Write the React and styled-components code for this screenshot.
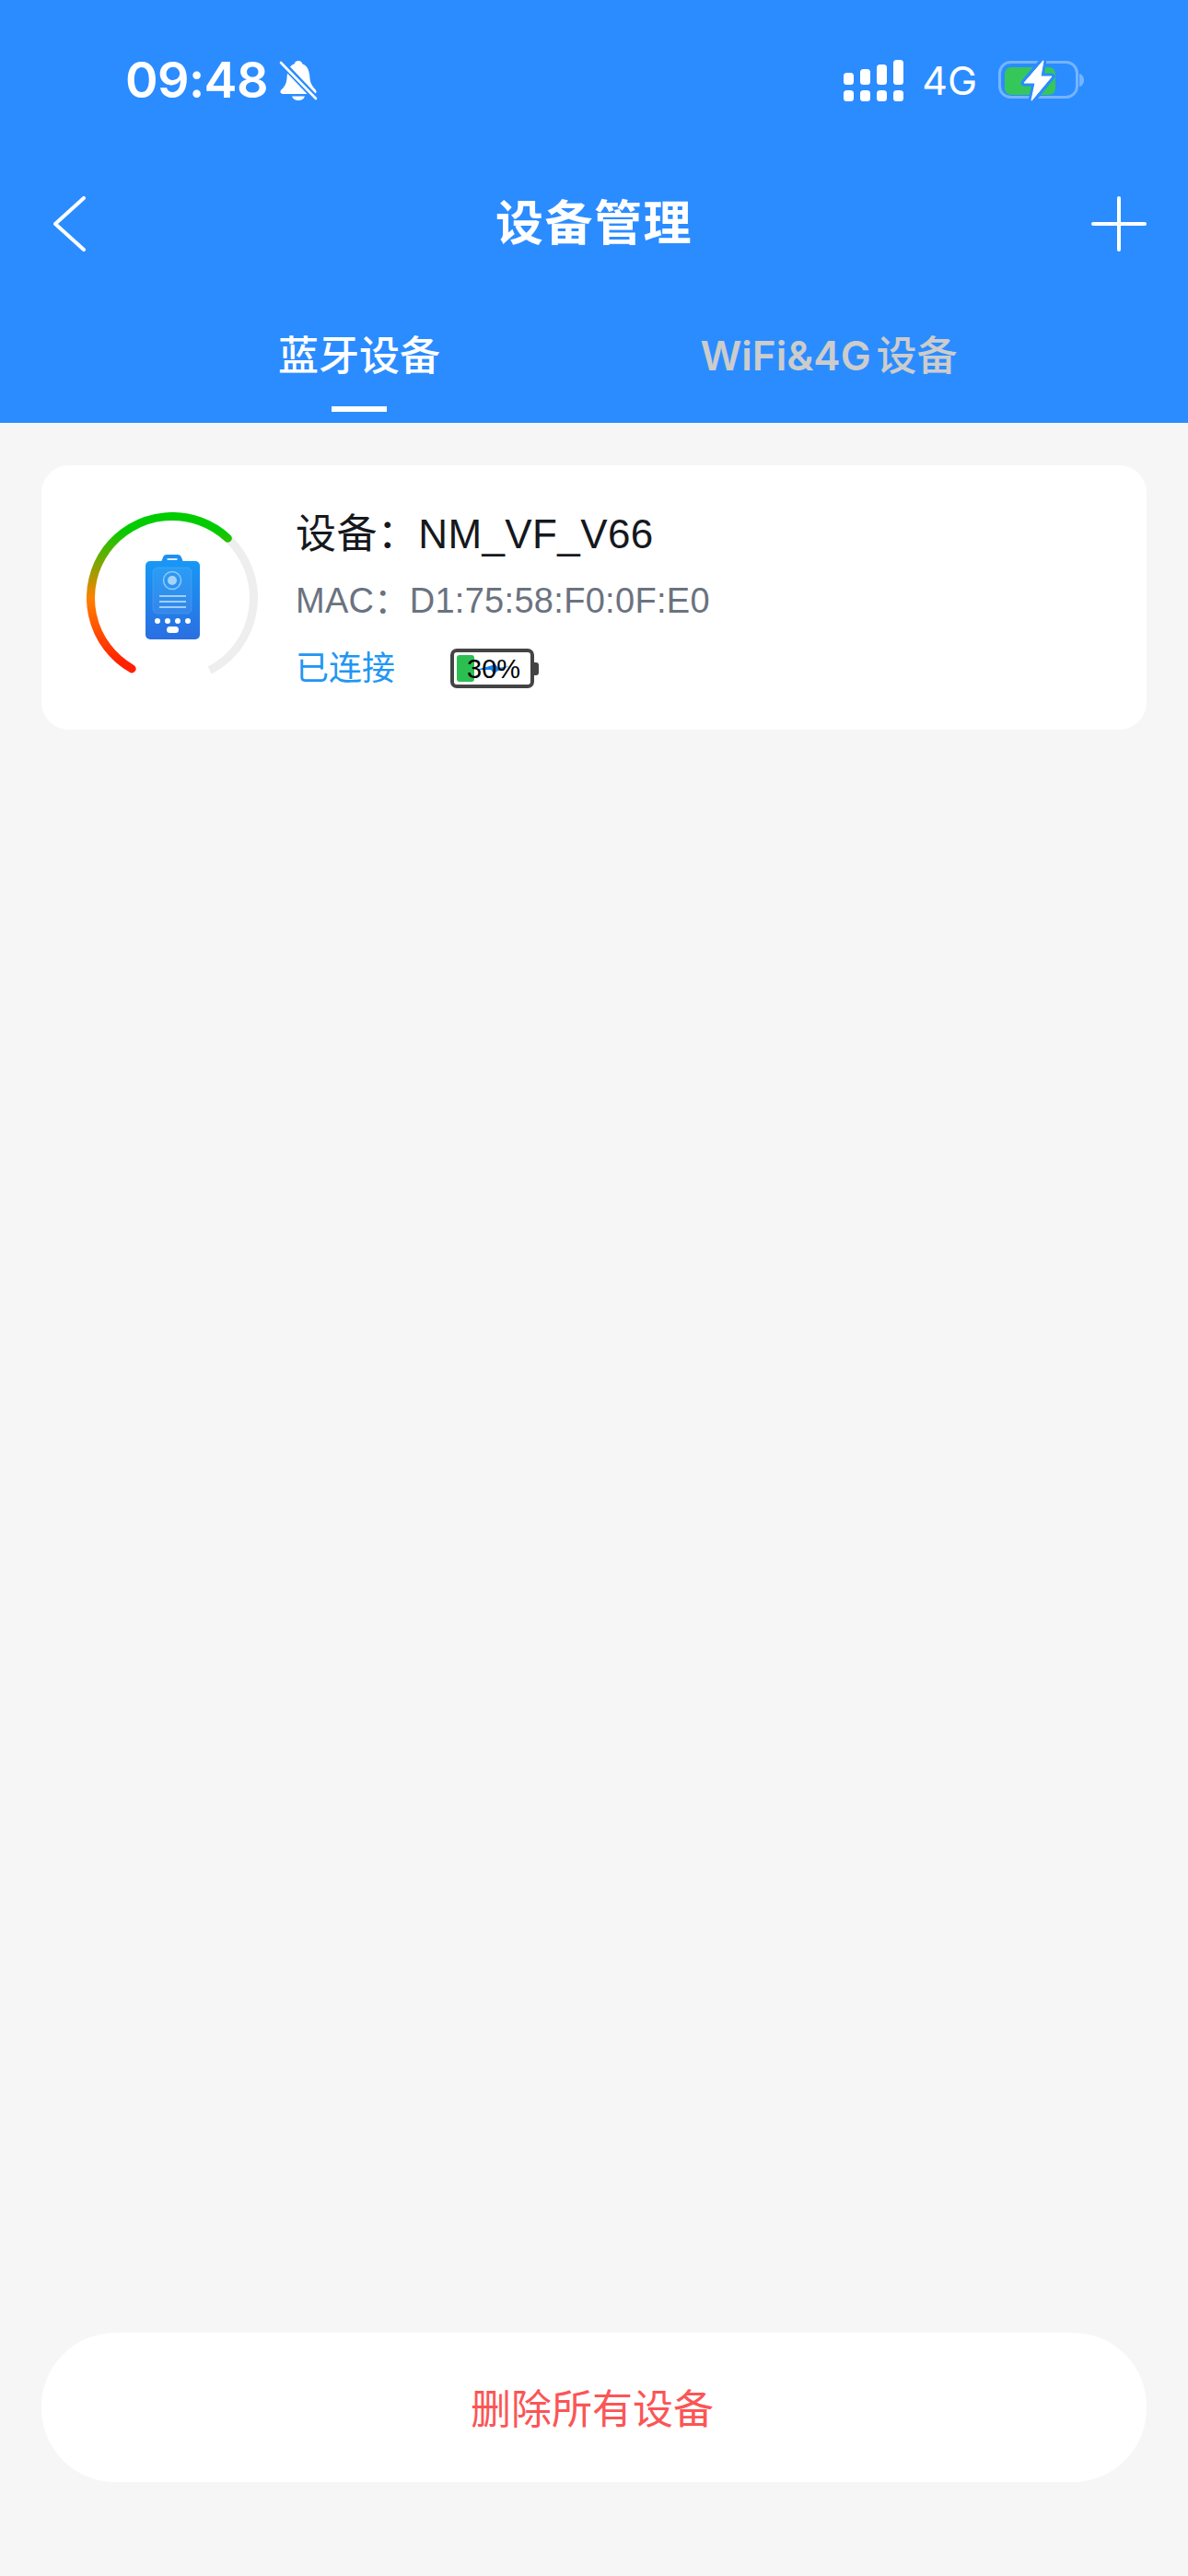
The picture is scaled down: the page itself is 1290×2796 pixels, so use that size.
import React from "react";
import styled, { createGlobalStyle } from "styled-components";

const GlobalStyle = createGlobalStyle`
  html, body {
    margin: 0;
    padding: 0;
    background: #f6f6f6;
  }
  * {
    box-sizing: border-box;
  }
`;

const FONT = `"Liberation Sans", "Noto Sans CJK SC", sans-serif`;

const Page = styled.div`
  width: 1290px;
  height: 2796px;
  display: flex;
  flex-direction: column;
  background: #f6f6f6;
  font-family: ${FONT};
  overflow: hidden;
`;

const Header = styled.header`
  height: 459px;
  flex-shrink: 0;
  background: #2b8cff;
  color: #fff;
  display: flex;
  flex-direction: column;
`;

const StatusBar = styled.div`
  display: flex;
  align-items: center;
  justify-content: space-between;
  height: 46px;
  margin-top: 64px;
  padding: 0 113px 0 136px;
`;

const TimeGroup = styled.div`
  display: flex;
  align-items: center;
  gap: 12px;
`;

const Time = styled.span`
  font-family: Inter, sans-serif;
  font-size: 54px;
  font-weight: 600;
  line-height: 46px;
  letter-spacing: -0.6px;
`;

const StatusIcons = styled.div`
  display: flex;
  align-items: center;
`;

const Network = styled.span`
  font-family: Inter, sans-serif;
  font-size: 43px;
  line-height: 46px;
  margin: 0 23px 0 20px;
`;

const NavBar = styled.nav`
  display: grid;
  grid-template-columns: 1fr auto 1fr;
  align-items: center;
  height: 60px;
  margin-top: 103px;
  padding: 0 45px;
`;

const BackIcon = styled.svg`
  justify-self: start;
  margin-left: 13px;
`;

const AddIcon = styled.svg`
  justify-self: end;
`;

const Title = styled.h1`
  margin: 0;
  font-size: 52px;
  font-weight: 600;
  line-height: 60px;
  letter-spacing: 1.5px;
`;

const Tabs = styled.div`
  display: grid;
  grid-template-columns: 1fr 1fr;
  margin-top: 89px;
  padding: 0 135px;
`;

const Tab = styled.div`
  display: flex;
  flex-direction: column;
  align-items: center;
  font-family: Inter, "Noto Sans CJK SC", sans-serif;
  font-size: 44px;
  font-weight: 500;
  line-height: 48px;
  color: ${(p) => (p.$active ? "#fff" : "#cccccc")};
`;

const TabLabel = styled.span`
  display: flex;
`;

const TabLatin = styled.span`
  margin-right: 6px;
  font-weight: 600;
`;

const Indicator = styled.span`
  width: 60px;
  height: 6px;
  margin-top: 31px;
  background: ${(p) => (p.$active ? "#fff" : "transparent")};
`;

const Main = styled.main`
  flex: 1;
  display: flex;
  flex-direction: column;
  padding: 46px 45px 102px;
`;

const DeviceCard = styled.section`
  display: flex;
  align-items: center;
  gap: 41px;
  height: 287px;
  padding-left: 49px;
  background: #fff;
  border-radius: 30px;
`;

const Gauge = styled.div`
  position: relative;
  width: 186px;
  height: 186px;
  flex-shrink: 0;
`;

const DeviceIcon = styled.svg`
  position: absolute;
  left: 64px;
  top: 46px;
`;

const DeviceInfo = styled.div`
  display: flex;
  flex-direction: column;
  padding-top: 4px;
`;

const DeviceName = styled.div`
  font-size: 44px;
  line-height: 52px;
  letter-spacing: 0.4px;
  color: #16181d;
`;

const DeviceMac = styled.div`
  margin-top: 24px;
  font-size: 38px;
  line-height: 44px;
  letter-spacing: 0.3px;
  color: #6b7280;
`;

const StatusRow = styled.div`
  display: flex;
  align-items: center;
  gap: 60px;
  margin-top: 30px;
`;

const Connected = styled.span`
  font-size: 36px;
  line-height: 44px;
  color: #2196f3;
`;

const DeviceBattery = styled.div`
  position: relative;
  display: flex;
  align-items: center;
  width: 96px;
  height: 43px;
`;

const BatteryShell = styled.div`
  width: 91px;
  height: 43px;
  padding: 3px;
  border: 4px solid #444;
  border-radius: 7px;
  background: #fff;
`;

const BatteryFill = styled.div`
  height: 100%;
  background: #2bbf52;
  border-radius: 3px;
`;

const BatteryCap = styled.span`
  width: 5px;
  height: 14px;
  background: #444;
  border-radius: 0 3px 3px 0;
`;

const BatteryBolt = styled.svg`
  position: absolute;
  left: 28px;
  top: 16px;
`;

const BatteryText = styled.span`
  position: absolute;
  left: 18px;
  top: 7px;
  font-size: 29px;
  line-height: 30px;
  color: #000;
`;

const DeleteButton = styled.button`
  margin-top: auto;
  height: 162px;
  padding: 0 4px 2px 0;
  border: 0;
  border-radius: 80px;
  background: #fff;
  color: #fb5556;
  font-family: ${FONT};
  font-size: 44px;
  cursor: pointer;
`;

const BellOff = () => (
  <svg width="42" height="44" viewBox="0 0 42 44">
    <path
      fill="#fff"
      d="M21 1c2.4 0 4 1.5 4.5 3.5C31 6 33 12 33.500 20c.5 7 4.500 10 6.500 13 1.500 2.500 0 4-3 4H5c-3 0-4.500-2-3-4 4-4 6-7 6.500-13C9 12 11 6 16.500 4.500 17 2.500 18.600 1 21 1z"
    />
    <path fill="#fff" d="M14 39.500h14c-1 3-4 4.500-7 4.500s-6-1.500-7-4.500z" />
    <path stroke="#2b8cff" strokeWidth="7" d="M0 0l42 44" />
    <path stroke="#fff" strokeWidth="2.600" strokeLinecap="round" d="M2 3l38 39" />
  </svg>
);

const SignalBars = () => (
  <svg width="65" height="45" viewBox="0 0 65 45" fill="#fff">
    <rect x="0" y="14" width="11" height="13" rx="3.500" />
    <rect x="18" y="10" width="11" height="17" rx="3.500" />
    <rect x="36" y="5" width="11" height="22" rx="3.500" />
    <rect x="54" y="0" width="11" height="27" rx="3.500" />
    <rect x="0" y="33" width="11" height="12" rx="3.500" />
    <rect x="18" y="33" width="11" height="12" rx="3.500" />
    <rect x="36" y="33" width="11" height="12" rx="3.500" />
    <rect x="54" y="33" width="11" height="12" rx="3.500" />
  </svg>
);

const ChargingBattery = () => (
  <svg width="93" height="45" viewBox="0 0 93 45">
    <rect
      x="1.500"
      y="2.500"
      width="84"
      height="38"
      rx="12"
      fill="none"
      stroke="#fff"
      strokeOpacity="0.35"
      strokeWidth="3"
    />
    <path fill="#fff" fillOpacity="0.35" d="M88 15c3 .5 5 3.500 5 7s-2 6.500-5 7z" />
    <rect x="7" y="8" width="55" height="30" rx="7" fill="#35c759" />
    <path
      d="M49 0L28 25h12l-4 20 22-27H46z"
      fill="#fff"
      stroke="#2b8cff"
      strokeWidth="7"
      strokeLinejoin="round"
      paintOrder="stroke"
    />
    <path d="M49 1L28 25h12l-4 19 22-26H46z" fill="#fff" stroke="#fff" strokeWidth="1" strokeLinejoin="round" />
  </svg>
);

// angle in degrees, clockwise from 12 o'clock
const RADIUS = 88.5;
const polar = (deg) => {
  const rad = (deg * Math.PI) / 180;
  return `${(93 + RADIUS * Math.sin(rad)).toFixed(2)} ${(93 - RADIUS * Math.cos(rad)).toFixed(2)}`;
};

const GaugeRing = () => (
  <svg width="186" height="186" viewBox="0 0 186 186">
    <defs>
      <linearGradient id="gaugeGradient" gradientUnits="userSpaceOnUse" x1="0" y1="0" x2="0" y2="186">
        <stop offset="0.1" stopColor="#00cc00" />
        <stop offset="0.5" stopColor="#ff8000" />
        <stop offset="0.88" stopColor="#ff2000" />
      </linearGradient>
    </defs>
    <path d={`M${polar(43)}A${RADIUS} ${RADIUS} 0 0 1 ${polar(152.6)}`} fill="none" stroke="#eeeeee" strokeWidth="9" />
    <path
      d={`M${polar(-150.3)}A${RADIUS} ${RADIUS} 0 1 1 ${polar(43)}`}
      fill="none"
      stroke="url(#gaugeGradient)"
      strokeWidth="9"
      strokeLinecap="round"
    />
  </svg>
);

const DeviceGlyph = () => (
  <DeviceIcon width="59" height="92" viewBox="0 0 59 92">
    <defs>
      <linearGradient id="deviceGradient" x1="0" y1="0" x2="0" y2="1">
        <stop offset="0" stopColor="#1798f6" />
        <stop offset="1" stopColor="#2a6fe2" />
      </linearGradient>
    </defs>
    <path d="M17 8l2-5c.6-2 2-3 4-3h12c2 0 3.400 1 4 3l2 5z" fill="#1f90f2" />
    <rect x="23.500" y="4" width="11" height="2" fill="#d6ecff" />
    <rect x="0" y="7" width="59" height="85" rx="5" fill="url(#deviceGradient)" />
    <rect x="8" y="14" width="42" height="50" rx="5" fill="#fff" fillOpacity="0.08" stroke="#fff" strokeOpacity="0.12" />
    <circle cx="29" cy="28" r="9.500" fill="none" stroke="#8cc8fa" strokeWidth="1.500" />
    <circle cx="29" cy="28" r="5" fill="#a5d4fb" />
    <g stroke="#9fcffa" strokeWidth="2">
      <path d="M15 45h29" />
      <path d="M15 51h29" />
      <path d="M15 57h29" />
    </g>
    <g fill="#fff">
      <circle cx="13" cy="72" r="3" />
      <circle cx="24" cy="72" r="3" />
      <circle cx="35" cy="72" r="3" />
      <circle cx="46" cy="72" r="3" />
      <rect x="23" y="78" width="13" height="7" rx="3.500" />
    </g>
  </DeviceIcon>
);

const App = () => {
  const device = { name: "NM_VF_V66", mac: "D1:75:58:F0:0F:E0", battery: 30 };

  return (
    <Page>
      <GlobalStyle />
      <Header>
        <StatusBar>
          <TimeGroup>
            <Time>09:48</Time>
            <BellOff />
          </TimeGroup>
          <StatusIcons>
            <SignalBars />
            <Network>4G</Network>
            <ChargingBattery />
          </StatusIcons>
        </StatusBar>
        <NavBar>
          <BackIcon width="35" height="60" viewBox="0 0 35 60" fill="none" stroke="#fff" strokeWidth="4" strokeLinecap="round" strokeLinejoin="round">
            <path d="M33 2L2 30l31 28" />
          </BackIcon>
          <Title>设备管理</Title>
          <AddIcon width="60" height="60" viewBox="0 0 60 60" fill="none" stroke="#fff" strokeWidth="4" strokeLinecap="round">
            <path d="M30 2v56M2 30h56" />
          </AddIcon>
        </NavBar>
        <Tabs>
          <Tab $active>
            蓝牙设备
            <Indicator $active />
          </Tab>
          <Tab>
            <TabLabel>
              <TabLatin>WiFi&amp;4G</TabLatin>设备
            </TabLabel>
            <Indicator />
          </Tab>
        </Tabs>
      </Header>
      <Main>
        <DeviceCard>
          <Gauge>
            <GaugeRing />
            <DeviceGlyph />
          </Gauge>
          <DeviceInfo>
            <DeviceName>设备：{device.name}</DeviceName>
            <DeviceMac>MAC：{device.mac}</DeviceMac>
            <StatusRow>
              <Connected>已连接</Connected>
              <DeviceBattery>
                <BatteryShell>
                  <BatteryFill style={{ width: `${device.battery * 0.83}%` }} />
                </BatteryShell>
                <BatteryCap />
                <BatteryBolt width="36" height="12" viewBox="0 0 36 12" fill="#1580f5">
                  <path d="M0 7L18 2 20 0l4 5 12-2-14 6-2 3-4-5z" />
                </BatteryBolt>
                <BatteryText>{device.battery}%</BatteryText>
              </DeviceBattery>
            </StatusRow>
          </DeviceInfo>
        </DeviceCard>
        <DeleteButton>删除所有设备</DeleteButton>
      </Main>
    </Page>
  );
};

export default App;
